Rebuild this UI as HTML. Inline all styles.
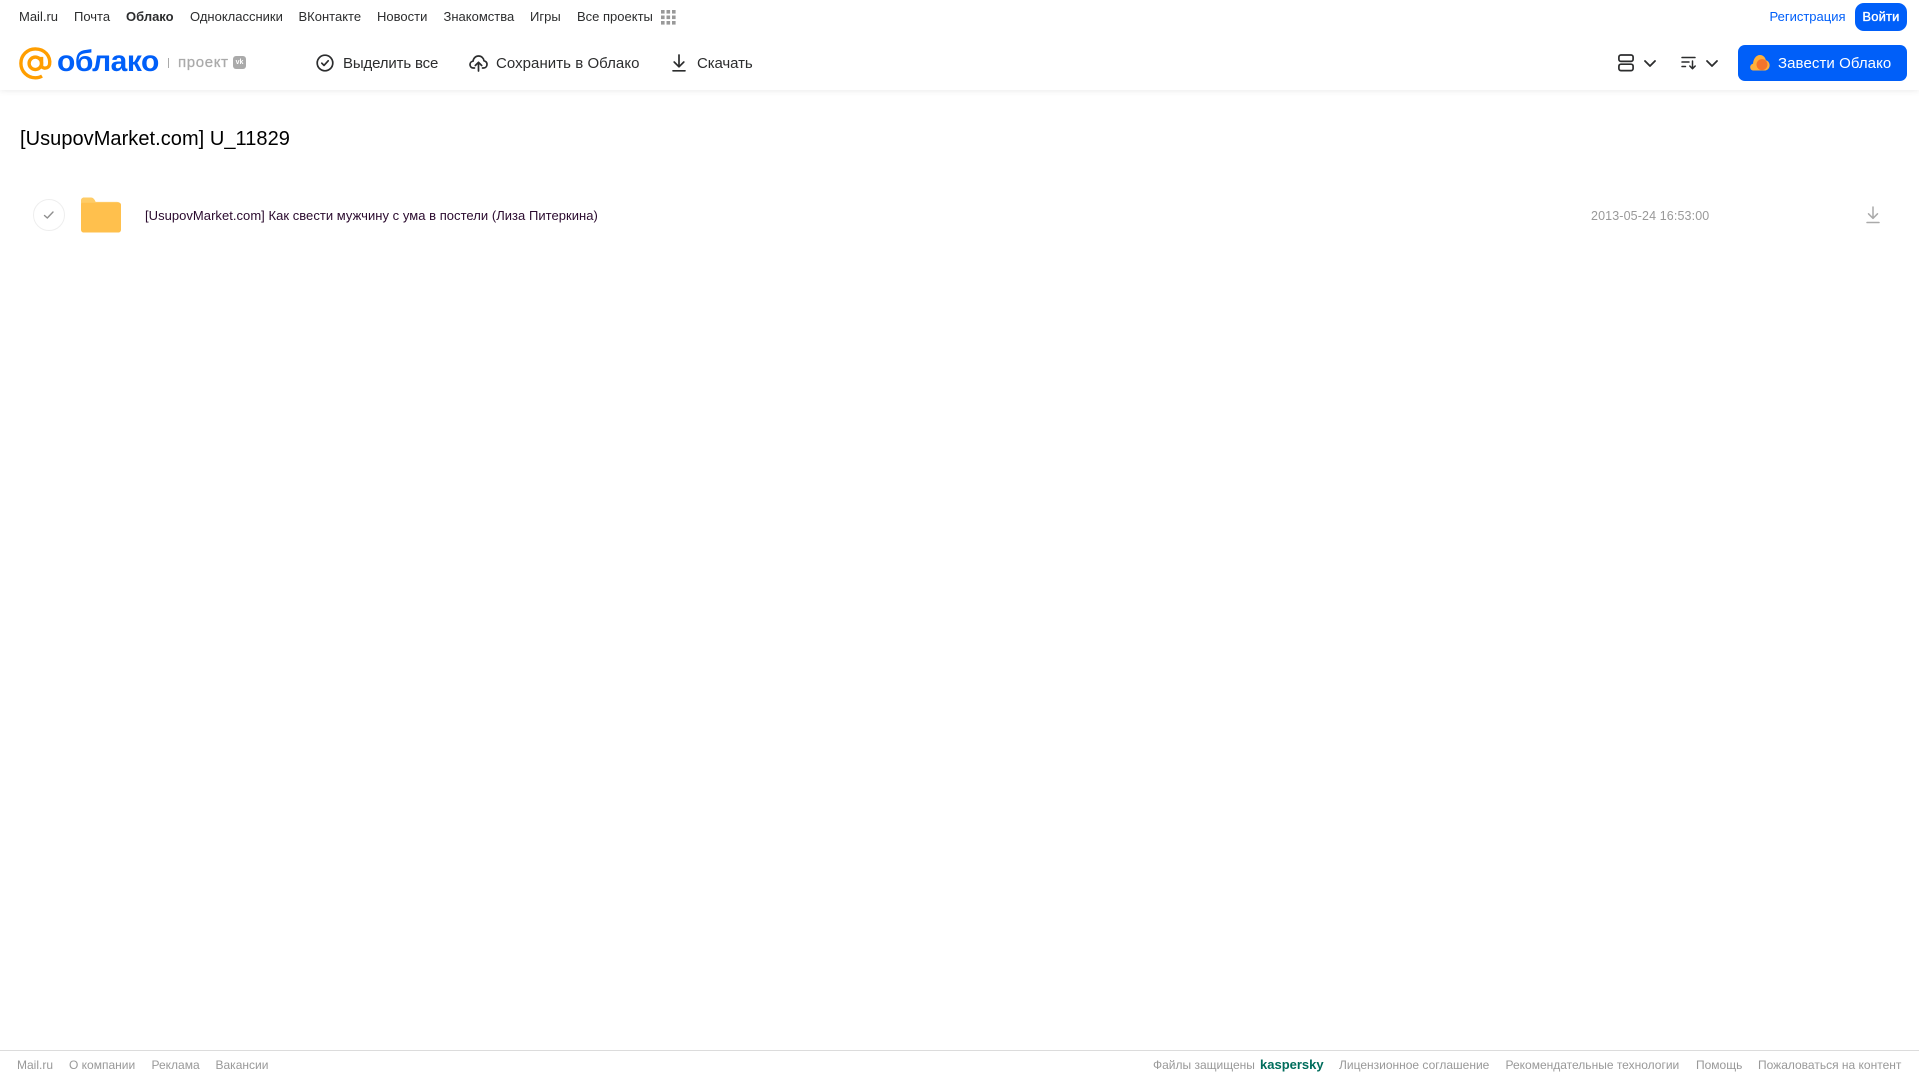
<!DOCTYPE html>
<html lang="ru"><head><meta charset="utf-8"><title>Облако</title>
<style>
html,body{margin:0;padding:0;background:#fff;width:1919px;height:1079px;overflow:hidden}
body{font-family:"Liberation Sans",Arial,sans-serif;position:relative}
.t{position:absolute;white-space:nowrap;line-height:20px}
.n{top:7px;font-size:13px;color:#2c2d2e}
.b{top:54px;font-size:15px;color:#2c2d2e}
.f{top:1055px;font-size:12px;color:#999}
svg{position:absolute;overflow:visible}
</style></head><body>
<div style="position:absolute;left:0;top:0;width:1919px;height:90px;background:#fff;box-shadow:0 1px 6px rgba(0,0,0,.08)"></div>

<span class="t n" style="left:19px">Mail.ru</span>
<span class="t n" style="left:74px">Почта</span>
<span class="t n" style="left:126px;font-weight:bold">Облако</span>
<span class="t n" style="left:190px">Одноклассники</span>
<span class="t n" style="left:298.5px">ВКонтакте</span>
<span class="t n" style="left:377px">Новости</span>
<span class="t n" style="left:443.5px">Знакомства</span>
<span class="t n" style="left:530px">Игры</span>
<span class="t n" style="left:577px">Все проекты</span>
<svg style="left:661px;top:10px" width="15" height="15" fill="#999"><rect x="0" y="0" width="3.6" height="3.6"/><rect x="5.5" y="0" width="3.6" height="3.6"/><rect x="11" y="0" width="3.6" height="3.6"/><rect x="0" y="5.5" width="3.6" height="3.6"/><rect x="5.5" y="5.5" width="3.6" height="3.6"/><rect x="11" y="5.5" width="3.6" height="3.6"/><rect x="0" y="11" width="3.6" height="3.6"/><rect x="5.5" y="11" width="3.6" height="3.6"/><rect x="11" y="11" width="3.6" height="3.6"/></svg>

<span class="t n" style="left:1769.5px;color:#005ff9">Регистрация</span>
<div style="position:absolute;left:1855px;top:3px;width:52px;height:28px;background:#005ff9;border-radius:9px;color:#fff;font-size:13px;line-height:27px;text-align:center;letter-spacing:.15px;-webkit-text-stroke:.35px #fff">Войти</div>

<svg style="left:18.5px;top:47px" width="33.5" height="33.5" viewBox="0 0 35.5 35.5" fill="none" stroke="#ff9e00" stroke-width="3.6"><circle cx="17.3" cy="17.3" r="6.6"/><path d="M23.9 10.5V19.5C23.9 23.5 31.5 23.5 32.4 18.5C33.8 9.5 27 2 17.3 2C8.8 2 2 8.8 2 17.3C2 25.8 8.8 32.6 17.3 32.6C20 32.6 22.4 32 24.4 30.8"/></svg>
<span class="t" style="left:57px;top:46px;font-size:30px;line-height:32px;font-weight:bold;color:#005ff9;letter-spacing:-.5px">облако</span>
<div style="position:absolute;left:168px;top:58px;width:1px;height:10px;background:#aaa"></div>
<span class="t" style="left:178px;top:53px;font-size:15px;color:#aaa;letter-spacing:.65px;-webkit-text-stroke:.25px #aaa">проект</span>
<div style="position:absolute;left:233px;top:56px;width:13px;height:13px;border-radius:3px;background:#aaa;color:#fff;font-size:7px;font-weight:bold;line-height:13px;text-align:center">vk</div>

<svg style="left:316px;top:54px" width="18" height="18" viewBox="0 0 18 18" fill="none" stroke="#2c2d2e" stroke-width="1.7" stroke-linecap="round" stroke-linejoin="round"><circle cx="9" cy="9" r="7.8"/><path d="M5.8 9.2L8 11.4L12.2 6.8"/></svg>
<span class="t b" style="left:343px;letter-spacing:-.15px">Выделить все</span>
<svg style="left:469px;top:54px" width="19" height="18" viewBox="0 0 19 18" fill="none" stroke="#2c2d2e" stroke-width="1.7" stroke-linecap="round" stroke-linejoin="round"><path d="M5.5 14H4.5C2.3 14 1 12.4 1 10.6C1 8.8 2.3 7.4 4 7.2C4.5 4 6.8 2 9.6 2C12.4 2 14.6 4 15 6.8C16.8 7.2 18 8.6 18 10.4C18 12.4 16.6 14 14.5 14H13.5"/><path d="M9.5 17V8.5M6.3 11.5L9.5 8.3L12.7 11.5"/></svg>
<span class="t b" style="left:496px;letter-spacing:.05px">Сохранить в Облако</span>
<svg style="left:671px;top:54px" width="16" height="18" viewBox="0 0 16 18" fill="none" stroke="#2c2d2e" stroke-width="1.7" stroke-linecap="round" stroke-linejoin="round"><path d="M8 1V12.5M3.2 8L8 12.8L12.8 8M2 16.8H14"/></svg>
<span class="t b" style="left:697px;letter-spacing:-.1px">Скачать</span>

<svg style="left:1618px;top:54px" width="16" height="18" viewBox="0 0 16 18" fill="none" stroke="#2c2d2e" stroke-width="1.7"><rect x=".9" y="1" width="14.2" height="6.4" rx="2"/><rect x=".9" y="10.2" width="14.2" height="6.4" rx="2"/></svg>
<svg style="left:1644px;top:60px" width="12" height="7" viewBox="0 0 12 7" fill="none" stroke="#2c2d2e" stroke-width="1.8" stroke-linecap="round" stroke-linejoin="round"><path d="M1 1L6 6L11 1"/></svg>
<svg style="left:1681px;top:56px" width="16" height="14" viewBox="0 0 16 14" fill="none" stroke="#2c2d2e" stroke-width="1.5" stroke-linecap="round" stroke-linejoin="round"><path d="M1 1.5H14M1 6H8M1 10.5H4.5M11.5 5V12.5M8.8 10L11.5 12.7L14.2 10"/></svg>
<svg style="left:1706px;top:60px" width="12" height="7" viewBox="0 0 12 7" fill="none" stroke="#2c2d2e" stroke-width="1.8" stroke-linecap="round" stroke-linejoin="round"><path d="M1 1L6 6L11 1"/></svg>

<div style="position:absolute;left:1738px;top:45px;width:169px;height:36px;background:#005ff9;border-radius:7px"></div>
<svg style="left:1750px;top:54px" width="20" height="17" viewBox="0 0 20 17"><path d="M3.5 16.5C1.5 16.5 .2 15 .2 13.2C.2 11.4 1.5 10 3 9.8C3.4 5 6 1 10 1C13.5 1 15.6 4 15.8 6.2C18 6.6 19.6 8.8 19.6 11.2C19.6 14.2 17.5 16.5 14.5 16.5Z" fill="#ffb03a"/><circle cx="12" cy="10.6" r="5.5" fill="#f4742b"/></svg>
<span class="t" style="left:1778px;top:54px;font-size:15px;color:#fff;letter-spacing:.08px">Завести Облако</span>

<div class="t" style="left:20px;top:126px;font-size:20px;line-height:26px;color:#000;letter-spacing:.05px">[UsupovMarket.com] U_11829</div>

<div style="position:absolute;left:33px;top:199px;width:30px;height:30px;border:1px solid #eee;border-radius:50%"></div>
<svg style="left:43px;top:210px" width="12" height="10" viewBox="0 0 12 10" fill="none" stroke="#8f8f8f" stroke-width="1.4" stroke-linecap="round" stroke-linejoin="round"><path d="M1.5 5.5L4.3 8L10 2"/></svg>
<svg style="left:81px;top:197px" width="40" height="36" viewBox="0 0 41 36"><path d="M0 3C0 1.3 1.3 0 3 0H10C12 0 13 1 14 2.5L15 4.5H37C39 4.5 41 6 41 8V12H0Z" fill="#ffcc66"/><path d="M0 7C0 6.2 .8 5.5 1.5 5.5H39C40.2 5.5 41 6.5 41 8V33C41 34.8 39.8 36 38 36H3C1.2 36 0 34.8 0 33Z" fill="#ffc04d"/></svg>
<span class="t" style="left:145px;top:206px;font-size:13px;color:#2a0a2e;letter-spacing:.035px">[UsupovMarket.com] Как свести мужчину с ума в постели (Лиза Питеркина)</span>
<span class="t" style="left:1591px;top:206px;font-size:12.5px;color:#999;letter-spacing:.12px">2013-05-24 16:53:00</span>
<svg style="left:1866px;top:206px" width="14" height="18" viewBox="0 0 14 18" fill="none" stroke="#aaa" stroke-width="1.5" stroke-linecap="round" stroke-linejoin="round"><path d="M7 1V12M2.5 7.8L7 12.3L11.5 7.8"/><path d="M1 16.5H13"/></svg>

<div style="position:absolute;left:0;top:1050px;width:1919px;height:1px;background:#dcdcdc"></div>
<span class="t f" style="left:17px">Mail.ru</span>
<span class="t f" style="left:69px">О компании</span>
<span class="t f" style="left:151.5px">Реклама</span>
<span class="t f" style="left:215.5px">Вакансии</span>
<span class="t f" style="left:1153px">Файлы защищены</span>
<span class="t f" style="left:1260px;color:#006d5c;font-weight:bold;font-size:13px">kaspersky</span>
<span class="t f" style="left:1339px">Лицензионное соглашение</span>
<span class="t f" style="left:1505.5px">Рекомендательные технологии</span>
<span class="t f" style="left:1696px">Помощь</span>
<span class="t f" style="left:1758px">Пожаловаться на контент</span>
</body></html>
